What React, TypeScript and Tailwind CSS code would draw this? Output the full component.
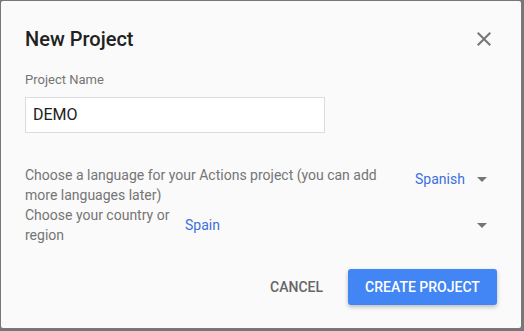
import React from "react";

function Arrow() {
  return (
    <svg width="24" height="24" viewBox="0 0 24 24" className="shrink-0">
      <path d="M7 10l5 5 5-5z" fill="#757575" />
    </svg>
  );
}

export default function App() {
  return (
    <div
      className="w-[524px] h-[331px] bg-[#777777] pt-[1px] pl-[1px] overflow-hidden"
      style={{ fontFamily: "Roboto, 'Liberation Sans', sans-serif" }}
    >
      <div className="w-[520px] h-[327px] bg-[#fafafa] rounded-[2px] pl-[24px] pr-[24px] pt-[26px] flex flex-col">
        <div className="flex items-center justify-between h-[24px]">
          <div className="text-[20px] leading-[24px] font-medium text-[#212121]">New Project</div>
          <svg width="24" height="24" viewBox="0 0 24 24" className="mr-[1px] -mt-[1px]">
            <path
              d="M19 6.41L17.59 5 12 10.59 6.41 5 5 6.41 10.59 12 5 17.59 6.41 19 12 13.41 17.59 19 19 17.59 13.41 12z"
              fill="#757575"
            />
          </svg>
        </div>
        <div className="mt-[21px] text-[13px] leading-[16px] text-[#757575]">Project Name</div>
        <div className="mt-[9px] w-[300px] h-[36px] border border-[#dcdcdc] bg-white flex items-center pl-[7px] text-[16px] leading-[20px] text-[#212121]">
          DEMO
        </div>
        <div className="mt-[32px] flex items-start text-[14px] leading-[20px]">
          <div className="w-[380px] text-[#757575]">
            Choose a language for your Actions project (you can add more languages later)
          </div>
          <div className="ml-[10px] flex-1 flex items-center justify-between pr-[3px] -mt-[2px]">
            <span className="text-[#3b6fe0] mt-[4px]">Spanish</span>
            <span className="mt-[4px]"><Arrow /></span>
          </div>
        </div>
        <div className="flex items-center text-[14px] leading-[20px]">
          <div className="w-[150px] text-[#757575]">Choose your country or region</div>
          <div className="ml-[10px] flex-1 flex items-center justify-between pr-[3px]">
            <span className="text-[#3b6fe0]">Spain</span>
            <Arrow />
          </div>
        </div>
        <div className="mt-[24px] flex justify-end items-center gap-[9px]">
          <button className="h-[36px] px-[16px] text-[14px] font-medium text-[#666666] uppercase">
            Cancel
          </button>
          <button className="h-[36px] w-[149px] rounded-[3px] bg-[#4285f4] text-white text-[14px] font-medium uppercase shadow-[0_2px_4px_rgba(0,0,0,0.25)]">
            Create Project
          </button>
        </div>
      </div>
    </div>
  );
}
